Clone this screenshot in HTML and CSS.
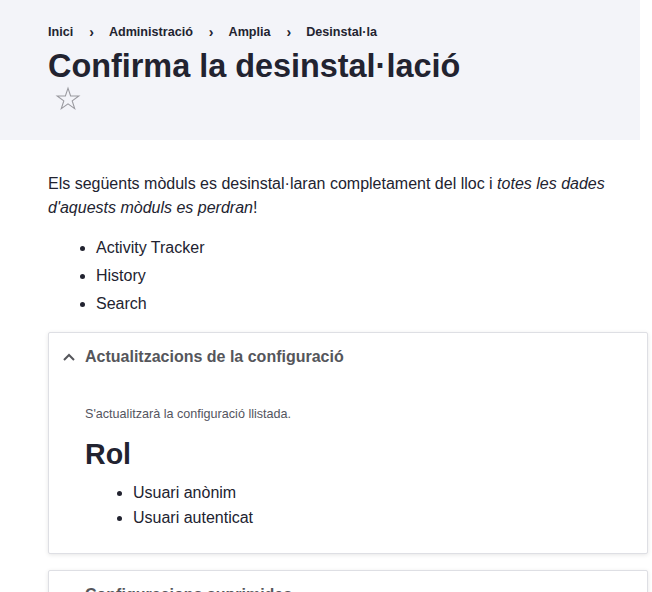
FILE: index.html
```html
<!DOCTYPE html>
<html lang="ca">
<head>
<meta charset="utf-8">
<title>Confirma la desinstal·lació</title>
<link rel="stylesheet" href="styles.css">
</head>
<body>
<header class="page-header">
  <nav class="breadcrumb">
    <a class="crumb" href="#">Inici</a><span class="sep">›</span>
    <a class="crumb" href="#">Administració</a><span class="sep">›</span>
    <a class="crumb" href="#">Amplia</a><span class="sep">›</span>
    <a class="crumb" href="#">Desinstal·la</a>
  </nav>
  <h1 class="page-title">Confirma la desinstal·lació</h1>
  <div class="shortcut">
    <svg width="26" height="26" viewBox="0 0 26 26"><path d="M13 2.2 L15.6 10 L23.8 10 L17.2 14.9 L19.7 22.7 L13 17.9 L6.3 22.7 L8.8 14.9 L2.2 10 L10.4 10 Z" fill="none" stroke="#9a9aa0" stroke-width="1.1" stroke-linejoin="miter"/></svg>
  </div>
</header>
<main class="content">
  <p class="intro">Els següents mòduls es desinstal·laran completament del lloc i <em>totes les dades d'aquests mòduls es perdran</em>!</p>
  <ul class="modules">
    <li>Activity Tracker</li>
    <li>History</li>
    <li>Search</li>
  </ul>
  <section class="details">
    <div class="summary">
      <svg class="chev" width="14" height="10" viewBox="0 0 14 10"><path d="M2 8 L7 3 L12 8" fill="none" stroke="#55565b" stroke-width="2"/></svg>
      <span>Actualitzacions de la configuració</span>
    </div>
    <div class="wrapper">
      <p class="desc">S'actualitzarà la configuració llistada.</p>
      <h2 class="group">Rol</h2>
      <ul class="items">
        <li>Usuari anònim</li>
        <li>Usuari autenticat</li>
      </ul>
    </div>
  </section>
  <section class="details">
    <div class="summary">
      <svg class="chev" width="14" height="10" viewBox="0 0 14 10"><path d="M2 3 L7 8 L12 3" fill="none" stroke="#55565b" stroke-width="2"/></svg>
      <span>Configuracions suprimides</span>
    </div>
  </section>
</main>
</body>
</html>
```

FILE: styles.css
```css
html, body {
  margin: 0;
  padding: 0;
  background: #ffffff;
  color: #222330;
  font-family: "Liberation Sans", Arial, sans-serif;
}
.page-header {
  width: 592px;
  background: #f3f4f9;
  padding: 24px 0 22px 48px;
  height: 94px;
}
.breadcrumb {
  display: flex;
  align-items: center;
  font-size: 12.6px;
  font-weight: bold;
  line-height: 16px;
}
.crumb {
  color: #222330;
  text-decoration: none;
}
.sep {
  margin: 0 15px 0 16px;
  font-size: 14px;
}
.page-title {
  margin: 5px 0 0 0;
  font-size: 32.4px;
  line-height: 42px;
  font-weight: bold;
}
.shortcut {
  display: flex;
  padding-left: 7px;
  margin-top: -1px;
}
.content {
  padding: 32px 4px 0 48px;
}
.intro {
  margin: 0 0 16px 0;
  font-size: 16px;
  line-height: 24px;
}
.modules {
  margin: 0 0 16px 0;
  padding-left: 48px;
  font-size: 16px;
  line-height: 24px;
}
.modules li {
  margin-bottom: 4px;
}
.details {
  border: 1px solid #dedfe4;
  border-radius: 2px;
  box-shadow: 0 1px 4px rgba(0, 0, 0, 0.1);
  margin-bottom: 16px;
  background: #fff;
}
.summary {
  display: flex;
  align-items: center;
  padding: 16px 16px 16px 13px;
  font-size: 16px;
  line-height: 16px;
  font-weight: bold;
  color: #55565b;
}
.chev {
  margin-right: 9px;
}
.wrapper {
  padding: 25px 36px 23px 36px;
}
.desc {
  margin: 0 0 14px 0;
  font-size: 12.6px;
  line-height: 16px;
  color: #545560;
}
.group {
  margin: 0 0 8px 0;
  font-size: 28.6px;
  line-height: 36px;
  font-weight: bold;
}
.items {
  margin: 0;
  padding-left: 48px;
  font-size: 16px;
  line-height: 25px;
}
```
